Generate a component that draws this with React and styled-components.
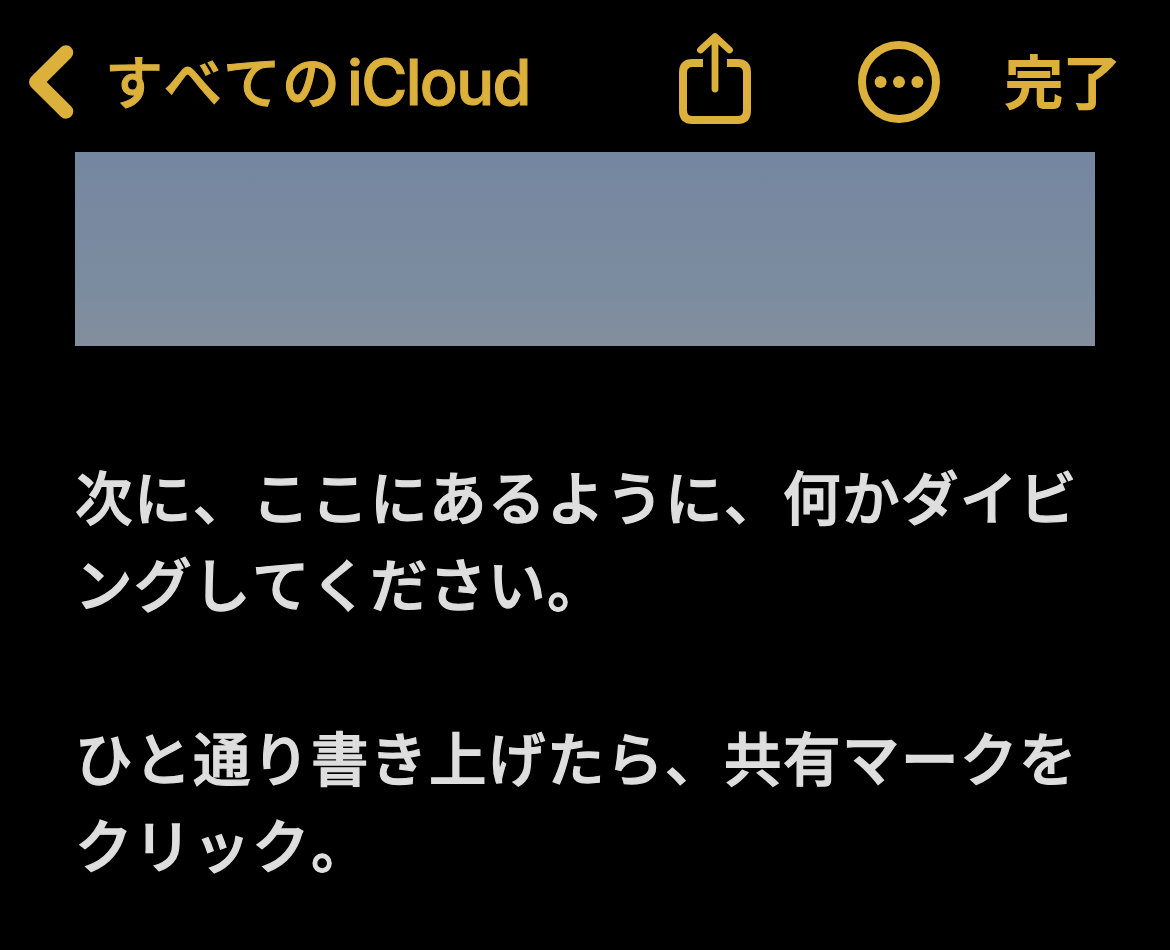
import React from 'react';
import styled, { createGlobalStyle } from 'styled-components';

const ACCENT = '#dbb03b';

const GlobalStyle = createGlobalStyle`
  body {
    margin: 0;
    background: #000;
  }
`;

const Screen = styled.div`
  box-sizing: border-box;
  width: 1170px;
  height: 950px;
  overflow: hidden;
  background: #000;
  font-family: 'Noto Sans CJK JP', sans-serif;
  font-kerning: none;
`;

const Toolbar = styled.header`
  display: flex;
  align-items: center;
  box-sizing: border-box;
  height: 152px;
  padding: 12px 51px 0 28px;
  color: ${ACCENT};
`;

const ToolbarButton = styled.button`
  display: flex;
  align-items: center;
  flex: none;
  height: 140px;
  margin: 0 0 0 ${props => props.$gap || 0}px;
  padding: 0;
  border: 0;
  background: none;
  color: inherit;
  font: inherit;
  font-kerning: inherit;
  white-space: nowrap;
`;

const BackLabel = styled.span`
  width: 242px;
  margin-left: 27px;
  padding-bottom: 7px;
  font-size: 58px;
  font-weight: 500;
  letter-spacing: 1px;
  line-height: 84px;
  text-align: left;
  -webkit-text-stroke: 1.1px currentColor;
`;

const Latin = styled.span`
  width: 185px;
  padding-bottom: 1px;
  font-family: Inter, sans-serif;
  font-size: 63px;
  font-weight: 500;
  letter-spacing: -1.7px;
  line-height: 84px;
  text-align: left;
  -webkit-text-stroke: 1.1px currentColor;
`;

const DoneLabel = styled.span`
  padding-bottom: 7px;
  font-size: 58px;
  font-weight: 500;
  line-height: 84px;
  -webkit-text-stroke: 1.8px currentColor;
`;

const Icon = styled.svg`
  display: block;
  flex: none;
  fill: none;
  stroke: currentColor;
`;

const Attachment = styled.div`
  height: 194px;
  margin: 0 75px;
  background: linear-gradient(#7586a0, #7b8ca0 65%, #828e9d);
`;

const Note = styled.main`
  padding: 106px 60px 0 75px;
  color: #dedede;
  font-size: 57.5px;
  font-weight: 500;
  letter-spacing: 1.5px;
  line-height: 87px;
  -webkit-text-stroke: 1.3px currentColor;
`;

const Paragraph = styled.p`
  margin: 0 0 87px;
  white-space: nowrap;
`;

const BackIcon = () => (
  <Icon width="50" height="80" viewBox="28 42 50 80">
    <path
      d="M66 52.500 36.300 82 66 111.500"
      strokeWidth="14.5"
      strokeLinecap="round"
      strokeLinejoin="round"
    />
  </Icon>
);

const ShareIcon = () => (
  <Icon width="72" height="100" viewBox="679 32 72 100">
    <path
      d="M703 63h-10.500q-9.500 0-9.500 9.500v38q0 9.500 9.500 9.500h45q9.500 0 9.500-9.500v-38q0-9.500-9.500-9.500H727"
      strokeWidth="8"
    />
    <path
      d="M715 89V37M700.500 50 715 36.500 729.500 50"
      strokeWidth="6.8"
      strokeLinecap="round"
      strokeLinejoin="round"
    />
  </Icon>
);

const MoreIcon = () => (
  <Icon width="82" height="82" viewBox="858 41 82 82">
    <circle cx="899" cy="82" r="37" strokeWidth="8" />
    <g fill="currentColor" stroke="none">
      <circle cx="880.600" cy="82" r="6" />
      <circle cx="899" cy="82" r="6" />
      <circle cx="917.400" cy="82" r="6" />
    </g>
  </Icon>
);

const App = () => (
  <>
    <GlobalStyle />
    <Screen>
      <Toolbar>
        <ToolbarButton>
          <BackIcon />
          <BackLabel>すべての</BackLabel>
          <Latin>iCloud</Latin>
        </ToolbarButton>
        <ToolbarButton $gap={147} aria-label="共有">
          <ShareIcon />
        </ToolbarButton>
        <ToolbarButton $gap={107} aria-label="その他">
          <MoreIcon />
        </ToolbarButton>
        <ToolbarButton $gap={65}>
          <DoneLabel>完了</DoneLabel>
        </ToolbarButton>
      </Toolbar>
      <Attachment />
      <Note>
        <Paragraph>
          次に、ここにあるように、何かダイビ
          <br />
          ングしてください。
        </Paragraph>
        <Paragraph>
          ひと通り書き上げたら、共有マークを
          <br />
          クリック。
        </Paragraph>
      </Note>
    </Screen>
  </>
);

export default App;
